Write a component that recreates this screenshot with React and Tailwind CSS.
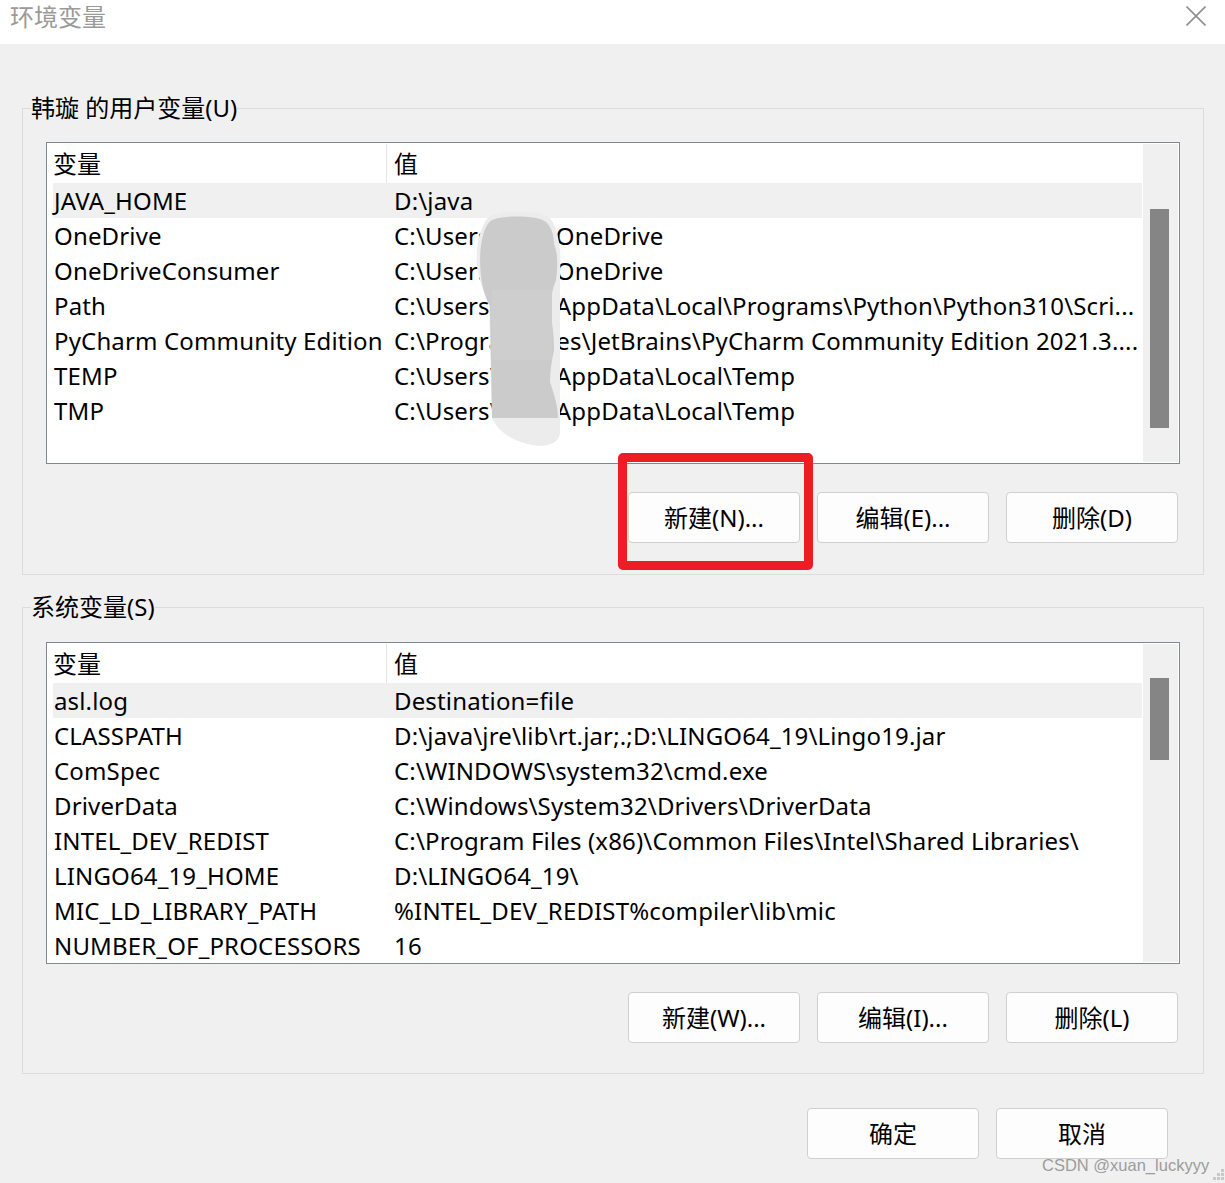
import React from "react";

const U = ({ pre, post }) => (
  <>
    {pre}
    <span className="inline-block w-[48px]" />
    {post}
  </>
);

const userRows = [
  ["JAVA_HOME", "D:\\java"],
  ["OneDrive", <U pre={"C:\\Users\\"} post={"\\OneDrive"} />],
  ["OneDriveConsumer", <U pre={"C:\\Users\\"} post={"\\OneDrive"} />],
  ["Path", <U pre={"C:\\Users\\"} post={"\\AppData\\Local\\Programs\\Python\\Python310\\Scri..."} />],
  ["PyCharm Community Edition", "C:\\Program Files\\JetBrains\\PyCharm Community Edition 2021.3...."],
  ["TEMP", <U pre={"C:\\Users\\"} post={"\\AppData\\Local\\Temp"} />],
  ["TMP", <U pre={"C:\\Users\\"} post={"\\AppData\\Local\\Temp"} />],
];

const sysRows = [
  ["asl.log", "Destination=file"],
  ["CLASSPATH", "D:\\java\\jre\\lib\\rt.jar;.;D:\\LINGO64_19\\Lingo19.jar"],
  ["ComSpec", "C:\\WINDOWS\\system32\\cmd.exe"],
  ["DriverData", "C:\\Windows\\System32\\Drivers\\DriverData"],
  ["INTEL_DEV_REDIST", "C:\\Program Files (x86)\\Common Files\\Intel\\Shared Libraries\\"],
  ["LINGO64_19_HOME", "D:\\LINGO64_19\\"],
  ["MIC_LD_LIBRARY_PATH", "%INTEL_DEV_REDIST%compiler\\lib\\mic"],
  ["NUMBER_OF_PROCESSORS", "16"],
];

function VarTable({ rows, thumbClass }) {
  return (
    <div className="h-[322px] border border-[#828790] bg-white p-px flex">
      <div className="flex-1 pl-[5px] overflow-hidden">
        <div className="flex h-[39px] items-center">
          <div className="w-[334px] h-full flex items-center border-r border-[#e5e5e5]">变量</div>
          <div className="pl-[7px]">值</div>
        </div>
        {rows.map((r, i) => (
          <div
            key={i}
            className={
              i === 0
                ? "flex h-[35px] items-center bg-[#f0f0f0] tracking-[0.15px]"
                : "flex h-[35px] items-center tracking-[0.15px]"
            }
          >
            <div className="w-[334px] shrink-0 pl-[1px] whitespace-nowrap">{r[0]}</div>
            <div className="pl-[7px] whitespace-nowrap">{r[1]}</div>
          </div>
        ))}
      </div>
      <div className="w-[35px] ml-px bg-[#f0f0f0] flex flex-col">
        <div className={"ml-[7px] w-[19px] bg-[#858585] " + thumbClass} />
      </div>
    </div>
  );
}

function Btn({ children, className = "" }) {
  return (
    <div
      className={
        "w-[172px] h-[51px] bg-[#fdfdfd] border border-[#d0d0d0] rounded-[4px] flex items-center justify-center text-[24px] " +
        className
      }
    >
      {children}
    </div>
  );
}

export default function App() {
  return (
    <div className="relative w-[1225px] h-[1183px] overflow-hidden bg-[#f0f0f0] text-black font-['Noto_Sans','Noto_Sans_CJK_SC',sans-serif] text-[24px]">
      <div className="h-[44px] bg-white flex justify-between items-start">
        <div className="pl-[10px] leading-[34px] text-[#9a9a9a]">环境变量</div>
        <svg className="mt-[6px] mr-[19px]" width="20" height="20" viewBox="0 0 20 20">
          <path d="M0.5 0.5 L19.5 19.5 M19.5 0.5 L0.5 19.5" stroke="#8e8e8e" strokeWidth="1.6" fill="none" />
        </svg>
      </div>

      <fieldset className="mt-[48px] ml-[22px] mr-[21px] border border-[#dcdcdc]">
        <legend className="ml-[8px] leading-[32px]">韩璇 的用户变量(U)</legend>
        <div className="px-[23px] pt-[18px] pb-[31px]">
          <VarTable rows={userRows} thumbClass="mt-[65px] h-[219px]" />
          <div className="mt-[28px] mr-[2px] flex justify-end gap-[17px]">
            <Btn>新建(N)...</Btn>
            <Btn>编辑(E)...</Btn>
            <Btn>删除(D)</Btn>
          </div>
        </div>
      </fieldset>

      <fieldset className="mt-[16px] ml-[22px] mr-[21px] border border-[#dcdcdc]">
        <legend className="ml-[8px] leading-[32px]">系统变量(S)</legend>
        <div className="px-[23px] pt-[19px] pb-[30px]">
          <VarTable rows={sysRows} thumbClass="mt-[34px] h-[82px]" />
          <div className="mt-[28px] mr-[2px] flex justify-end gap-[17px]">
            <Btn>新建(W)...</Btn>
            <Btn>编辑(I)...</Btn>
            <Btn>删除(L)</Btn>
          </div>
        </div>
      </fieldset>

      <div className="mt-[34px] pr-[57px] flex justify-end gap-[17px]">
        <Btn>确定</Btn>
        <Btn>取消</Btn>
      </div>

      {/* privacy smudge */}
      <svg className="absolute left-[470px] top-[210px]" width="100" height="240" viewBox="0 0 100 240">
        <path
          d="M20,6 C30,0 72,0 80,8 C88,18 92,40 90,62 L90,222 C90,236 70,238 58,234 C42,230 28,222 22,208 L19,92 C6,72 4,40 10,24 C13,14 16,9 20,6 Z"
          fill="#ececec"
        />
        <path
          d="M22,10 C32,5 68,5 76,12 C82,18 84,26 84,34 C88,44 88,56 86,70 C82,80 80,90 80,100 C82,112 84,124 84,140 C82,150 80,160 80,172 C84,184 88,196 88,208 L22,208 L20,96 C10,80 8,48 12,30 C14,20 17,13 22,10 Z"
          fill="#cbcbcb"
        />
        <path d="M22,80 L82,80 L82,150 L22,150 Z" fill="#cecece" />
      </svg>

      {/* red highlight */}
      <div className="absolute left-[618px] top-[453px] w-[195px] h-[117px] border-[9px] border-[#ee1c25] rounded-[5px]" />

      {/* watermark */}
      <div className="absolute left-[1042px] top-[1154px] text-[16.5px] leading-[22px] text-[#9c9c9c] font-['Liberation_Sans',sans-serif]">
        CSDN @xuan_luckyyy
      </div>
      <svg className="absolute left-[1212px] top-[1168px]" width="13" height="15" viewBox="0 0 13 15">
        <rect x="9" y="1" width="3" height="3" fill="#c8c8c8" />
        <rect x="5" y="5" width="3" height="3" fill="#c8c8c8" />
        <rect x="9" y="5" width="3" height="3" fill="#c8c8c8" />
        <rect x="1" y="9" width="3" height="3" fill="#c8c8c8" />
        <rect x="5" y="9" width="3" height="3" fill="#c8c8c8" />
        <rect x="9" y="9" width="3" height="3" fill="#c8c8c8" />
      </svg>
    </div>
  );
}
